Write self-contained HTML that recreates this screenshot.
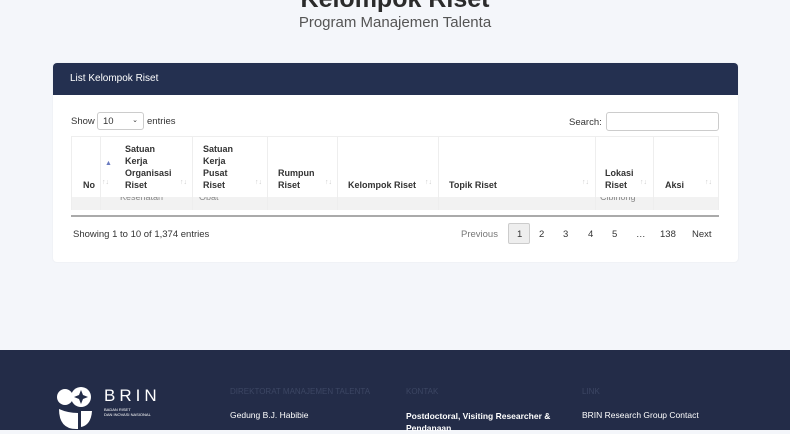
<!DOCTYPE html>
<html><head><style>
*{box-sizing:border-box;margin:0;padding:0}
body{width:790px;height:430px;overflow:hidden;background:#f4f6fa;font-family:"Liberation Sans",sans-serif;position:relative;color:#333}
.abs{position:absolute}
.title{left:0;width:790px;text-align:center;top:-15px;font-size:25px;font-weight:bold;color:#2b2b2b}
.sub{left:0;width:790px;text-align:center;top:14px;font-size:15px;color:#555}
.card{left:53px;top:63px;width:685px;height:199px;background:#fff;border-radius:4px;box-shadow:0 0 2px rgba(0,0,0,.06)}
.hdr{left:53px;top:63px;width:685px;height:32px;background:#243050;border-radius:4px 4px 0 0;color:#fff;font-size:10px;padding:10px 0 0 17px}
.s{font-size:9.5px;color:#333}
.col{position:absolute;top:136px;height:74px;border-left:1px solid #eee}
.h{position:absolute;font-size:9px;font-weight:bold;color:#333;line-height:12px}
.ar{position:absolute;font-size:7px;color:#ccc}
.pg{position:absolute;top:229px;font-size:9.5px;color:#333}
.foot{left:0;top:350px;width:790px;height:80px;background:#232c48}
.ft{position:absolute;font-size:8.5px;color:#fff}
.fh{position:absolute;font-size:8px;color:#3c4663;top:387px}
.cl{position:absolute;top:197px;height:7px;overflow:hidden;font-size:9px;color:#888}
.cl span{position:relative;top:-5px}
</style></head><body>
<div class="abs title">Kelompok Riset</div>
<div class="abs sub">Program Manajemen Talenta</div>
<div class="abs card"></div>
<div class="abs hdr">List Kelompok Riset</div>
<div class="abs s" style="left:71px;top:116px">Show</div>
<div class="abs" style="left:97px;top:112px;width:47px;height:18px;border:1px solid #ccc;border-radius:3px;font-size:9.5px;padding:3px 0 0 5px">10<span style="position:absolute;right:5px;top:3px;font-size:7px">&#8964;</span></div>
<div class="abs s" style="left:147px;top:116px">entries</div>
<div class="abs s" style="left:569px;top:117px">Search:</div>
<div class="abs" style="left:606px;top:112px;width:113px;height:19px;border:1px solid #ccc;border-radius:3px"></div>
<div class="abs" style="left:71px;top:136px;width:648px;height:61px;border-top:1px solid #eee"></div>
<div class="abs" style="left:71px;top:197px;width:648px;height:13px;background:#f2f2f2"></div>
<div class="col" style="left:71px"></div><div class="col" style="left:100px"></div><div class="col" style="left:192px"></div><div class="col" style="left:267px"></div><div class="col" style="left:337px"></div><div class="col" style="left:438px"></div><div class="col" style="left:595px"></div><div class="col" style="left:653px"></div><div class="col" style="left:718px"></div>
<div class="h" style="left:83px;top:179px">No</div>
<div class="h" style="left:125px;top:143px">Satuan<br>Kerja<br>Organisasi<br>Riset</div>
<div class="h" style="left:203px;top:143px">Satuan<br>Kerja<br>Pusat<br>Riset</div>
<div class="h" style="left:278px;top:167px">Rumpun<br>Riset</div>
<div class="h" style="left:348px;top:179px">Kelompok Riset</div>
<div class="h" style="left:449px;top:179px">Topik Riset</div>
<div class="h" style="left:605px;top:167px">Lokasi<br>Riset</div>
<div class="h" style="left:665px;top:179px">Aksi</div>
<div class="ar" style="left:102px;top:179px">↑↓</div><div class="ar" style="left:105px;top:160px;color:#6a7bc0">▲</div>
<div class="ar" style="left:180px;top:179px">↑↓</div><div class="ar" style="left:255px;top:179px">↑↓</div><div class="ar" style="left:325px;top:179px">↑↓</div><div class="ar" style="left:425px;top:179px">↑↓</div><div class="ar" style="left:582px;top:179px">↑↓</div><div class="ar" style="left:640px;top:179px">↑↓</div><div class="ar" style="left:705px;top:179px">↑↓</div>
<div class="cl" style="left:120px"><span>Kesehatan</span></div>
<div class="cl" style="left:199px"><span>Obat</span></div>
<div class="cl" style="left:600px"><span>Cibinong</span></div>
<div class="abs" style="left:71px;top:215px;width:648px;height:2px;background:#aaa"></div>
<div class="abs s" style="left:73px;top:229px">Showing 1 to 10 of 1,374 entries</div>
<div class="pg" style="left:461px;color:#777">Previous</div>
<div class="abs" style="left:508px;top:223px;width:22px;height:21px;background:#eee;border:1px solid #ccc;border-radius:2px"></div>
<div class="pg" style="left:517px">1</div><div class="pg" style="left:539px">2</div><div class="pg" style="left:563px">3</div><div class="pg" style="left:588px">4</div><div class="pg" style="left:612px">5</div><div class="pg" style="left:636px">…</div><div class="pg" style="left:660px">138</div><div class="pg" style="left:692px">Next</div>
<div class="abs foot"></div>
<svg class="abs" style="left:56px;top:385px" width="45" height="45" viewBox="0 0 45 45"><circle cx="9" cy="12" r="8" fill="#fff"/><circle cx="25" cy="12" r="10" fill="#fff"/><path d="M25 5 L27 10 L32 12 L27 14 L25 19 L23 14 L18 12 L23 10Z" fill="#232c48"/><path d="M3 24 Q3 45 22 44 L22 28 Q12 28 3 24Z" fill="#fff"/><path d="M25 26 L36 26 Q35 40 25 42Z" fill="#fff"/></svg>
<div class="ft" style="left:104px;top:386px;font-size:17px;letter-spacing:4px">BRIN</div>
<div class="ft" style="left:104px;top:407px;font-size:4px;line-height:5px">BADAN RISET<br>DAN INOVASI NASIONAL</div>
<div class="fh" style="left:230px">DIREKTORAT MANAJEMEN TALENTA</div>
<div class="fh" style="left:406px">KONTAK</div>
<div class="fh" style="left:582px">LINK</div>
<div class="ft" style="left:230px;top:410px">Gedung B.J. Habibie</div>
<div class="ft" style="left:406px;top:410px;font-weight:bold;line-height:12px">Postdoctoral, Visiting Researcher &amp;<br>Pendanaan</div>
<div class="ft" style="left:582px;top:410px">BRIN Research Group Contact</div>
</body></html>
